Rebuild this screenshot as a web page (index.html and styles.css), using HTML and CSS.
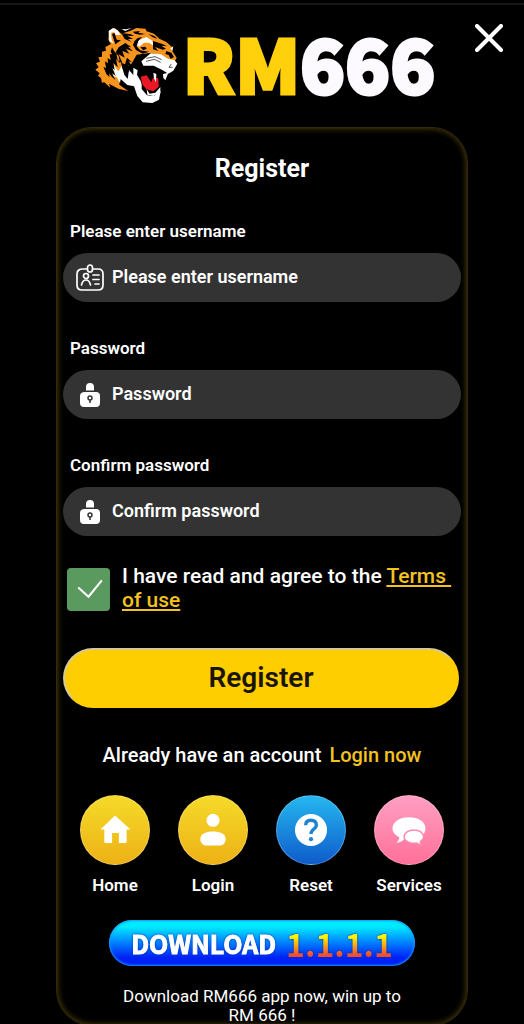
FILE: index.html
```html
<!DOCTYPE html>
<html lang="en">
<head>
<meta charset="utf-8">
<meta name="viewport" content="width=device-width, initial-scale=1">
<title>RM666 Register</title>
<link rel="stylesheet" href="styles.css">
</head>
<body>
<header class="header">
  <div class="logo">
    <svg class="tiger" viewBox="30 34 252 234" aria-hidden="true">
      <path fill="#f7941d" d="M73 75 75 48 92 40 112 57 140 48 157 40 184 42 188 50 210 57 226 72 247 82 263 96 265 110 278 129 271 142 252 137 230 120 198 115 158 120 142 148 108 164 106 210 132 229 103 222 75 207 79 219 60 202 54 205 51 190 42 183 47 176 34 165 44 158 36 145 48 141 43 128 54 126 54 111 66 108 64 97 81 88Z"/>
      <path fill="#fff" d="M76 80 74 49 87 40 101 47 110 61 95 61 89 51 81 56 83 76 90 87Z"/>
      <path fill="#000" d="M84 58 92 55 98 75 111 77 94 89Z"/>
      <path fill="#fff" d="M157 90 164 77 187 67 205 78 209 93 195 84 180 84 166 96ZM172 140 200 116 231 119 251 132 272 137 280 147 268 168 253 177 235 166 209 153 178 153ZM88 149 103 170 113 153 121 180 131 193 135 166 148 181 148 159 165 169 173 195 173 223 189 242 210 244 230 230 225 255 205 265 176 263 160 244 150 215 130 211 110 193 108 205 98 187 84 184 92 172 84 162Z"/>
      <path fill="#000" d="M163 153 181 157 210 156 239 172 246 188 238 210 222 235 198 243 180 227 170 199 159 180Z"/>
      <path fill="#e81924" d="M170 186 188 182 202 203 207 189 223 191 224 216 208 230 187 224 175 209Z"/>
      <path fill="#fff" d="M208 174 217 178 216 203 210 191ZM237 178 253 174 244 197 238 190ZM188 224 197 237 214 234 229 217 229 235 208 244 190 240Z"/>
      <path fill="#000" d="M112 55 141 59 150 64 130 63 147 73 132 73 143 82 122 73ZM146 51 168 49 163 54 184 58 168 60 153 57ZM151 80 161 70 174 67 163 79 158 95 168 107 195 111 176 117 156 106 147 91ZM193 58 211 64 220 73 205 67ZM207 79 235 88 249 95 232 93 246 102 236 105 213 97 223 109 207 104ZM247 109 262 114 270 127 260 133 254 121 244 118ZM124 85 142 98 132 96 147 110 126 103 136 117 115 109 122 129 104 119 116 147 101 136 96 111 104 98ZM84 98 80 112 85 119 77 119 80 136 71 130 72 146 63 140 66 161 58 156 67 178 77 188 75 176 84 187 94 196 84 175 95 184 85 160 92 166 88 145 101 158 96 132 108 146 104 124 90 109ZM129 129 144 143 134 140 146 158 131 150 136 173 124 163 126 180 115 160 111 144 123 149Z"/>
      <path fill="#f7941d" d="M168 94 183 90 196 100 184 109 171 105Z"/>
      <path fill="#000" d="M169 98 184 96 188 102 178 107Z"/>
      <path fill="none" stroke="#000" stroke-width="2" d="M187 131 213 126 233 135M186 140 211 134 230 143M262 148 255 158 266 158"/>
      <path fill="#fff" d="M112 43 126 44 143 40 124 49ZM259 101 268 95 265 109Z"/>
    </svg>
    <span class="wordmark"><span class="wordmark-gold">RM</span>666</span>
  </div>
  <button class="close" type="button" aria-label="Close">
    <svg viewBox="0 0 28 28" aria-hidden="true"><path d="M2 2 26 26M26 2 2 26" fill="none" stroke="#fff" stroke-width="4" stroke-linecap="round"/></svg>
  </button>
</header>
<main class="card">
  <h1 class="title">Register</h1>
  <form class="form">
    <div class="field">
      <label for="username">Please enter username</label>
      <div class="control">
        <svg class="icon" viewBox="0 0 28 28" fill="none" stroke="#fff" stroke-width="1.7" stroke-linecap="round" aria-hidden="true"><path d="M11 5H7Q1 5 1 10v11q0 5 5 5h16q5 0 5-5V10q0-5-5-5h-5"/><rect x="11.500" y="1" width="5" height="7" rx="2.500"/><circle cx="10" cy="12" r="2.500"/><path d="M5.500 21q1-5 4.500-5t4.500 5M17 11h6M17 15.500h6M19 20h4"/></svg>
        <input id="username" type="text" placeholder="Please enter username">
      </div>
    </div>
    <div class="field">
      <label for="password">Password</label>
      <div class="control">
        <svg class="icon" viewBox="0 0 28 28" aria-hidden="true"><path fill="#fff" d="M10 9.500V6q0-4 4-4t4 4v3.500ZM9 11h11q4 0 4 4v7q0 4-4 4H8q-4 0-4-4v-7q0-4 5-4Z"/><circle cx="14" cy="17" r="2" fill="none" stroke="#333" stroke-width="1.500"/><path d="M14 19v3" stroke="#333" stroke-width="1.500"/></svg>
        <input id="password" type="password" placeholder="Password">
      </div>
    </div>
    <div class="field">
      <label for="confirm">Confirm password</label>
      <div class="control">
        <svg class="icon" viewBox="0 0 28 28" aria-hidden="true"><path fill="#fff" d="M10 9.500V6q0-4 4-4t4 4v3.500ZM9 11h11q4 0 4 4v7q0 4-4 4H8q-4 0-4-4v-7q0-4 5-4Z"/><circle cx="14" cy="17" r="2" fill="none" stroke="#333" stroke-width="1.500"/><path d="M14 19v3" stroke="#333" stroke-width="1.500"/></svg>
        <input id="confirm" type="password" placeholder="Confirm password">
      </div>
    </div>
    <div class="agree">
      <span class="check">
        <input id="agree" type="checkbox" checked>
        <svg viewBox="0 0 42 42" aria-hidden="true"><path d="M11 19 21 28 34 12" fill="none" stroke="#fff" stroke-width="2"/></svg>
      </span>
      <label class="agree-text" for="agree">I have read and agree to the <a href="#terms">Terms&nbsp; of use</a></label>
    </div>
    <button class="submit" type="submit">Register</button>
  </form>
  <p class="signin">Already have an account <a href="#login">Login now</a></p>
  <nav class="links">
    <a href="#home"><span class="disc gold"><svg viewBox="0 0 70 70" aria-hidden="true"><path fill="#fff" d="M35 20 51 34.500H47V47q0 1.500-1.500 1.500H39V38h-7v10.500h-6.500Q24 48.500 24 47V34.500H20Z"/></svg></span>Home</a>
    <a href="#login"><span class="disc gold"><svg viewBox="0 0 70 70" aria-hidden="true"><circle cx="35" cy="25" r="6.700" fill="#fff"/><path fill="#fff" d="M22 44c0-5 6-7.500 13-7.500S48 39 48 44c0 5-3 7-7 7H29c-4 0-7-2-7-7Z"/></svg></span>Login</a>
    <a href="#reset"><span class="disc blue"><svg viewBox="0 0 70 70" aria-hidden="true"><circle cx="35" cy="35" r="16.500" fill="#fff"/><path d="M29.500 30q0-5 5.500-5t5.500 5c0 4-5.500 4-5.500 9" fill="none" stroke="#1d83d5" stroke-width="3.500"/><circle cx="35" cy="44.500" r="2.200" fill="#1d83d5"/></svg></span>Reset</a>
    <a href="#services"><span class="disc pink"><svg viewBox="0 0 70 70" aria-hidden="true"><path fill="#fff" d="M35 22c10 0 17 5 17 11.500S45 45 35 45c-2 0-4 0-5-.5-2 2.500-5 3.500-8 3.500 2-1.500 3-3.500 3-5.500-4-2-7-5-7-9C18 27 25 22 35 22Z"/><path fill="#fff" stroke="#ff89ae" stroke-width="1.500" d="M40 35c5.500 0 10 3 10 7 0 2-1.500 4-3.500 5 0 1.500 1 2.500 2 3.500-2.500 0-4-.500-5.500-2-7 1-13-2-13-6.500 0-4 4.500-7 10-7Z"/></svg></span>Services</a>
  </nav>
  <a class="download" href="#download"><span class="download-word">DOWNLOAD</span><span class="download-num">1.1.1.1</span></a>
  <p class="note">Download RM666 app now, win up to RM&nbsp;666&nbsp;!</p>
</main>
</body>
</html>
```
FILE: styles.css
```css
* { box-sizing: border-box; }
body {
  margin: 0;
  background: #000;
  color: #fff;
  font-family: Roboto, "Liberation Sans", sans-serif;
}
svg { display: block; }
a { color: #f3c321; text-decoration: none; }

.header {
  position: relative;
  margin-top: 3px;
  border-top: 2px solid #161616;
  padding: 21px 0;
}
.logo { display: flex; justify-content: center; align-items: flex-start; gap: 5px; height: 80px; padding-left: 5px; }
.tiger { width: 84px; height: 78px; }
.wordmark {
  font: 900 74px/72px "Noto Sans CJK SC", "Noto Sans", sans-serif;
  color: #fcf9ff;
  white-space: nowrap;
  -webkit-text-stroke: 3px #fcf9ff;
}
.wordmark-gold { color: #ffd00b; -webkit-text-stroke-color: #ffd00b; }
.close {
  position: absolute;
  top: 19px;
  right: 21px;
  width: 28px;
  height: 28px;
  padding: 0;
  border: 0;
  background: none;
}

.card {
  margin: 0 56px;
  padding: 25px 6px 0;
  border: 1px solid #34290a;
  border-radius: 36px;
  box-shadow: inset 0 0 6px #5c4c0c;
}
.title { margin: 0; font-size: 25px; line-height: 32px; font-weight: 700; text-align: center; }
.form { display: flex; flex-direction: column; padding-top: 36px; }
.field { display: flex; flex-direction: column; gap: 12px; margin-bottom: 36px; }
.field label { padding-left: 7px; font-size: 17px; line-height: 20px; font-weight: 600; }
.control {
  display: flex;
  align-items: center;
  gap: 8px;
  height: 49px;
  padding: 0 13px;
  border-radius: 25px;
  background: #333;
}
.icon { flex: none; width: 28px; height: 28px; }
.control input {
  flex: 1;
  min-width: 0;
  padding: 0 0 2px;
  border: 0;
  outline: 0;
  background: none;
  color: #fff;
  font: 600 18px/24px Roboto, sans-serif;
}
.control input::placeholder { color: #fff; opacity: 1; }

.agree { display: flex; gap: 12px; padding: 0 4px; margin-top: -8px; }
.check { position: relative; flex: none; width: 43px; height: 43px; margin-top: 4px; }
.check input {
  appearance: none;
  display: block;
  width: 100%;
  height: 100%;
  margin: 0;
  border-radius: 4px;
  background: #5b9a5f;
}
.check svg { position: absolute; inset: 0; pointer-events: none; }
.agree-text { font-size: 21px; line-height: 24px; font-weight: 500; }
.agree-text a { text-decoration: underline; }

.submit {
  height: 60px;
  margin: 36px 2px 0 0;
  border: 2px solid;
  border-color: #d7c995 #ffce00 #ffce00 #d7c995;
  border-radius: 30px;
  background: #ffce00;
  color: #1b1500;
  font: 600 28px/32px Roboto, sans-serif;
}
.signin { margin: 35px 0 0; font-size: 20px; line-height: 24px; font-weight: 500; text-align: center; }
.signin a { margin-left: 3px; }
.links { display: grid; grid-template-columns: repeat(4, 1fr); margin: 28px 3px 0; }
.links a {
  display: flex;
  flex-direction: column;
  align-items: center;
  gap: 10px;
  color: #fff;
  font-size: 17px;
  line-height: 20px;
  font-weight: 600;
}
.disc { width: 70px; height: 70px; border-radius: 50%; border: 1px solid #ffffff40; }
.gold { background: linear-gradient(#f5da29, #edb116); }
.blue { background: linear-gradient(#25b7ef, #0e5bcb); }
.pink { background: linear-gradient(#ff9fc2, #ff7099); }

.download {
  display: flex;
  justify-content: center;
  align-items: center;
  gap: 10px;
  width: 306px;
  max-width: 100%;
  height: 46px;
  margin: 25px auto 0;
  border-radius: 23px;
  background: linear-gradient(#00eaff 15%, #0084ff 48%, #0021f5 82%);
  box-shadow: inset 0 0 2px 1px #1497ff;
  font: 700 25px/40px "Noto Sans CJK SC", "Noto Sans", sans-serif;
}
.download-word { color: #fff; -webkit-text-stroke: 1px #fff; filter: drop-shadow(0 0 1px #0030b0); }
.download-num {
  font-size: 32px;
  color: transparent;
  background: linear-gradient(#fff500 35%, #f04b35 80%);
  background-clip: text;
  -webkit-background-clip: text;
  filter: drop-shadow(0 0 1px #003080);
}
.note { margin: 21px auto 0; max-width: 290px; font-size: 17px; line-height: 19px; text-align: center; }
```
